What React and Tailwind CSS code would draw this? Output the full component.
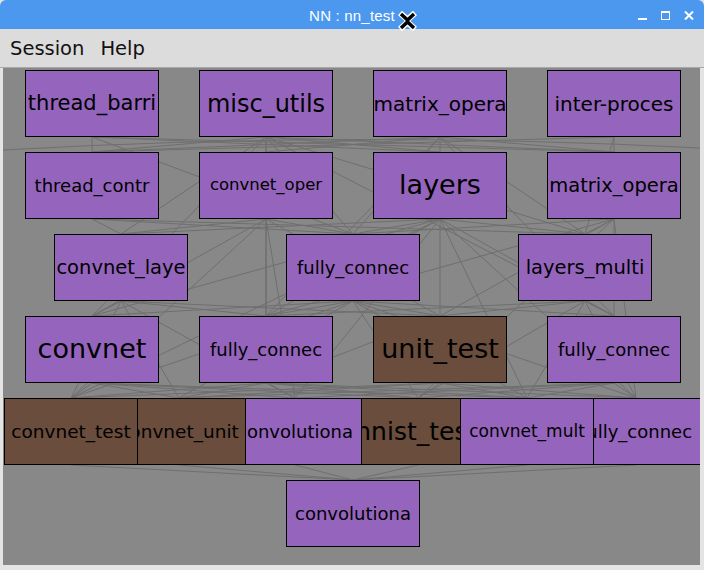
import React from "react";

// graph nodes, positions relative to the canvas (page x - 3, page y - 68)
const nodes = [
  { label: "thread_barri", pos: "left-[22px] top-[2px]", x: 22, y: 2, size: "text-[21px]" },
  { label: "misc_utils", pos: "left-[196px] top-[2px]", x: 196, y: 2, size: "text-[24px]" },
  { label: "matrix_opera", pos: "left-[370px] top-[2px]", x: 370, y: 2, size: "text-[20px]" },
  { label: "inter-proces", pos: "left-[544px] top-[2px]", x: 544, y: 2, size: "text-[20px]" },
  { label: "thread_contr", pos: "left-[22px] top-[84px]", x: 22, y: 84, size: "text-[18px]" },
  { label: "convnet_oper", pos: "left-[196px] top-[84px]", x: 196, y: 84, size: "text-[16.5px]" },
  { label: "layers", pos: "left-[370px] top-[84px]", x: 370, y: 84, size: "text-[27px]" },
  { label: "matrix_opera", pos: "left-[544px] top-[84px]", x: 544, y: 84, size: "text-[19.5px]" },
  { label: "convnet_laye", pos: "left-[51px] top-[166px]", x: 51, y: 166, size: "text-[19.5px]" },
  { label: "fully_connec", pos: "left-[283px] top-[166px]", x: 283, y: 166, size: "text-[18px]" },
  { label: "layers_multi", pos: "left-[515px] top-[166px]", x: 515, y: 166, size: "text-[19.5px]" },
  { label: "convnet", pos: "left-[22px] top-[248px]", x: 22, y: 248, size: "text-[27px]" },
  { label: "fully_connec", pos: "left-[196px] top-[248px]", x: 196, y: 248, size: "text-[18px]" },
  { label: "unit_test", pos: "left-[370px] top-[248px]", x: 370, y: 248, size: "text-[27px]", test: true },
  { label: "fully_connec", pos: "left-[544px] top-[248px]", x: 544, y: 248, size: "text-[18px]" },
  { label: "convnet_test", pos: "left-[1px] top-[330px] z-[6]", x: 1, y: 330, size: "text-[18.5px]", test: true },
  { label: "convnet_unit", pos: "left-[109px] top-[330px] z-[5]", x: 109, y: 330, size: "text-[18.5px]", test: true },
  { label: "convolutiona", pos: "left-[225px] top-[330px] z-[4]", x: 225, y: 330, size: "text-[18px]" },
  { label: "mnist_test", pos: "left-[348px] top-[330px] z-[1] pr-[12px]", x: 348, y: 330, size: "text-[25px]", test: true },
  { label: "convnet_mult", pos: "left-[457px] top-[330px] z-[3]", x: 457, y: 330, size: "text-[17px]" },
  { label: "fully_connec", pos: "left-[566px] top-[330px] z-[2]", x: 566, y: 330, size: "text-[18px]" },
  { label: "convolutiona", pos: "left-[283px] top-[412px]", x: 283, y: 412, size: "text-[18px]" },
];

const edges = [
  [0, 4], [0, 6], [0, 9], [0, 7],
  [1, 4], [1, 5], [1, 6], [1, 7], [1, 8], [1, 9], [1, 10], [1, 11], [1, 12], [1, 14],
  [2, 5], [2, 6], [2, 7], [2, 9], [2, 10], [2, 12], [2, 14], [2, 4],
  [3, 4], [3, 10], [3, 7],
  [4, 8], [4, 9], [4, 10],
  [5, 8], [5, 11], [5, 12], [5, 15], [5, 9], [5, 13], [5, 17],
  [6, 8], [6, 9], [6, 10], [6, 11], [6, 12], [6, 13], [6, 14], [6, 17], [6, 19], [6, 20], [6, 15],
  [7, 9], [7, 10], [7, 12], [7, 14], [7, 20], [7, 13], [7, 18],
  [8, 11], [8, 15], [8, 16], [8, 17], [8, 13], [8, 12],
  [9, 12], [9, 13], [9, 14], [9, 16], [9, 18], [9, 20], [9, 11], [9, 15], [9, 19],
  [10, 13], [10, 14], [10, 19], [10, 20], [10, 12], [10, 18],
  [11, 15], [11, 16], [11, 18], [11, 19], [11, 17],
  [12, 13], [12, 15], [12, 16], [12, 17], [12, 18], [12, 19], [12, 20],
  [13, 15], [13, 16], [13, 18], [13, 19], [13, 20],
  [14, 16], [14, 18], [14, 19], [14, 20], [14, 17],
  [16, 21], [17, 21], [18, 21], [19, 21], [20, 21], [15, 21],
];

const W = 134;
const H = 67;

const Node = ({ node }) => (
  <div
    className={`absolute ${node.pos} w-[134px] h-[67px] border border-black flex items-center justify-center overflow-hidden whitespace-nowrap text-black ${node.size} ${
      node.test ? "bg-[#6a4d3c]" : "bg-[#9565bd]"
    }`}
  >
    {node.label}
  </div>
);

const App = () => {
  return (
    <div className="w-[704px] h-[570px] flex flex-col bg-[#e4e4e4] font-['DejaVu_Sans',sans-serif] relative overflow-hidden">
      {/* Title bar */}
      <div className="h-[29px] bg-[#4c98ef] rounded-t-[6px] relative flex items-center justify-center">
        <span className="text-white text-[15px] font-['Liberation_Sans',sans-serif] font-light mt-[4px] tracking-[0.2px]">
          NN : nn_test
        </span>
        <div className="absolute right-[10px] top-[11px] flex items-start gap-[14px]">
          <div className="w-[9px] h-[9px] flex items-end">
            <div className="w-[9px] h-[2px] bg-white" />
          </div>
          <div className="w-[9px] h-[9px] border border-white border-t-2" />
          <svg width="10" height="9" viewBox="0 0 10 9">
            <path d="M1 0.5 L9 8.5 M9 0.5 L1 8.5" stroke="white" strokeWidth="2" />
          </svg>
        </div>
      </div>

      {/* Window body */}
      <div className="flex-1 flex flex-col pl-[3px] pr-[4px] pb-[5px]">
        {/* Menu bar */}
        <div className="h-[39px] -ml-[3px] -mr-[4px] pl-[10px] pt-[2px] flex items-center gap-[16px] bg-[#dcdcdc] border-b border-[#a8a8a8] text-[19.5px] text-[#111]">
          <span>Session</span>
          <span>Help</span>
        </div>

        {/* Graph canvas */}
        <div className="flex-1 relative bg-[#878887] overflow-hidden">
          <svg className="absolute inset-0" width="697" height="497">
            {edges.map(([a, b], i) => {
              const s = nodes[a];
              const t = nodes[b];
              return (
                <line
                  key={i}
                  x1={s.x + W / 2}
                  y1={s.y + H}
                  x2={t.x + W / 2}
                  y2={t.y}
                  stroke="#6f6f6f"
                  strokeWidth="1"
                />
              );
            })}
            <path d="M 0 82 Q 350 62 697 80" stroke="#6f6f6f" strokeWidth="1" fill="none" />
          </svg>
          {nodes.map((n, i) => (
            <Node key={i} node={n} />
          ))}
        </div>
      </div>

      {/* mouse cursor */}
      <svg className="absolute left-[397px] top-[11px]" width="21" height="20" viewBox="0 0 21 20">
        <path
          d="M3 2 L10.5 8.5 L18 2 M3 18 L10.5 11.5 L18 18"
          stroke="white"
          strokeWidth="6"
          fill="none"
        />
        <path
          d="M4 3 L10.5 9 L17 3 M4 17 L10.5 11 L17 17 M10.5 9 L10.5 11"
          stroke="black"
          strokeWidth="3.5"
          fill="none"
        />
      </svg>
    </div>
  );
};

export default App;
